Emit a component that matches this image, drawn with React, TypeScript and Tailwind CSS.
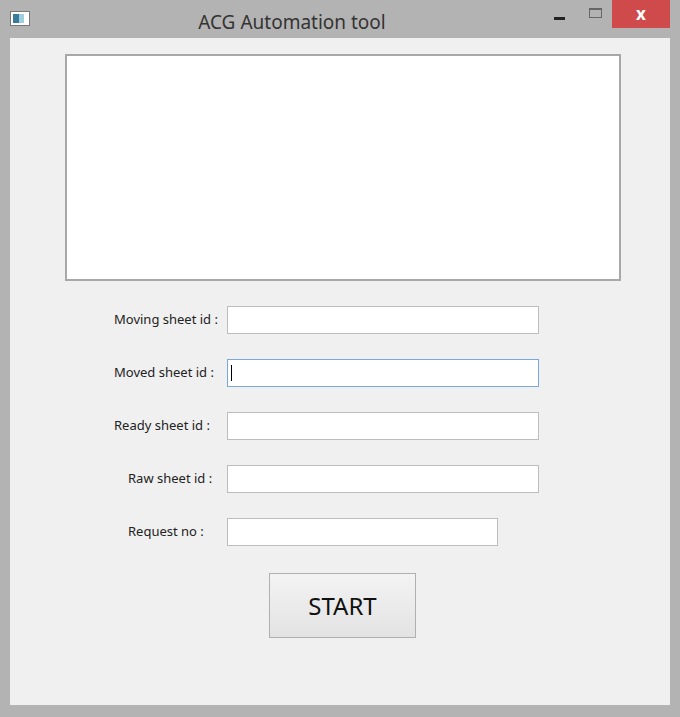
const fields = [
  { label: 'Moving sheet id :', pl: 'pl-[104px]', w: 'w-[312px]', focus: false },
  { label: 'Moved sheet id :', pl: 'pl-[104px]', w: 'w-[312px]', focus: true },
  { label: 'Ready sheet id :', pl: 'pl-[104px]', w: 'w-[312px]', focus: false },
  { label: 'Raw sheet id :', pl: 'pl-[118px]', w: 'w-[312px]', focus: false },
  { label: 'Request no :', pl: 'pl-[118px]', w: 'w-[271px]', focus: false },
]

export default function App() {
  return (
    <div className="flex h-[717px] w-[680px] flex-col bg-[#b3b3b3] px-[10px] pb-[12px] font-['Segoe_UI','Open_Sans','Liberation_Sans',sans-serif]">
      {/* title bar */}
      <div className="flex h-[38px] items-start">
        <div className="mt-[11px] flex h-[15px] w-[20px] items-center border border-[#777] bg-white px-[2px]">
          <div className="h-[9px] w-[6px] bg-[#3a7a9a]" />
          <div className="h-[9px] w-[5px] bg-[#9fd0e0]" />
        </div>
        <div className="mt-[8px] flex-1 text-center text-[19px] text-[#333]">ACG Automation tool</div>
        <div className="mt-[17px] h-[3px] w-[11px] bg-[#222]" />
        <div className="ml-[24px] mt-[8px] h-[10px] w-[13px] border border-[#666] border-t-2" />
        <div className="ml-[10px] flex h-[28px] w-[58px] items-center justify-center bg-[#cf4b4b] text-[17px] font-bold text-white">x</div>
      </div>
      {/* client */}
      <div className="flex flex-1 flex-col bg-[#f0f0f0] pt-[16px]">
        <div className="ml-[55px] h-[227px] w-[556px] border-2 border-[#a8a8a8] bg-white" />
        <div className="mt-[25px] flex flex-col gap-[25px]">
          {fields.map((f) => (
            <div key={f.label} className="flex h-[28px] items-center">
              <div className={`${f.pl} w-[217px] text-[13px] text-[#222]`}>{f.label}</div>
              <div
                className={`flex h-[28px] ${f.w} items-center border bg-white px-[3px] ${
                  f.focus ? 'border-[#7aa7e0]' : 'border-[#bdbdbd]'
                }`}
              >
                {f.focus && <div className="h-[16px] w-px bg-black" />}
              </div>
            </div>
          ))}
        </div>
        <div className="ml-[259px] mt-[27px] flex h-[65px] w-[147px] items-center justify-center border border-[#b0b0b0] bg-gradient-to-b from-[#f3f3f3] to-[#e3e3e3] font-['Liberation_Serif',serif] text-[24px] text-[#111]">
          START
        </div>
      </div>
    </div>
  )
}
